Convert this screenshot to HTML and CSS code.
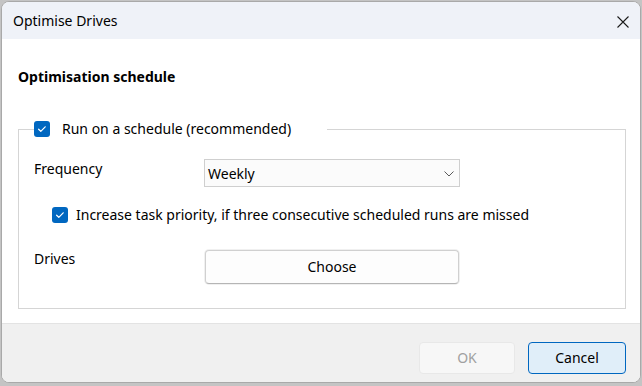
FILE: index.html
```html
<!DOCTYPE html>
<html lang="en">
<head>
<meta charset="utf-8">
<title>Optimise Drives</title>
<link rel="stylesheet" href="styles.css">
</head>
<body>
<div class="window">
  <div class="titlebar">
    <span class="title">Optimise Drives</span>
    <span class="close" aria-label="Close">
      <svg width="12" height="12" viewBox="0 0 12 12"><path d="M0.5 0.5 L11.5 11.5 M11.5 0.5 L0.5 11.5" stroke="#1b1b1b" stroke-width="1.1" fill="none"/></svg>
    </span>
  </div>
  <div class="content">
    <h1 class="heading">Optimisation schedule</h1>
    <fieldset class="group">
      <legend class="group-legend">
        <span class="check">
          <svg width="16" height="16" viewBox="0 0 16 16"><path d="M4.6 8.2 L6.8 10.3 L11.2 5.8" stroke="#fff" stroke-width="1.2" fill="none" stroke-linecap="round" stroke-linejoin="round"/></svg>
        </span>
        <span class="legend-text">Run on a schedule (recommended)</span>
      </legend>
      <div class="row freq-row">
        <span class="label">Frequency</span>
        <div class="combo">
          <span class="combo-value">Weekly</span>
          <svg class="chevron" width="10" height="6" viewBox="0 0 10 6"><path d="M0.5 0.5 L5 5 L9.5 0.5" stroke="#5a5a5a" stroke-width="1" fill="none"/></svg>
        </div>
      </div>
      <div class="check-row">
        <span class="check">
          <svg width="16" height="16" viewBox="0 0 16 16"><path d="M4.6 8.2 L6.8 10.3 L11.2 5.8" stroke="#fff" stroke-width="1.2" fill="none" stroke-linecap="round" stroke-linejoin="round"/></svg>
        </span>
        <span class="check-text">Increase task priority, if three consecutive scheduled runs are missed</span>
      </div>
      <div class="row drives-row">
        <span class="label">Drives</span>
        <button class="btn choose" type="button">Choose</button>
      </div>
    </fieldset>
  </div>
  <div class="footer">
    <button class="btn ok" type="button" disabled>OK</button>
    <button class="btn cancel" type="button">Cancel</button>
  </div>
</div>
</body>
</html>
```

FILE: styles.css
```css
html, body {
  margin: 0;
  padding: 0;
}
body {
  background: #c4c4c4;
  width: 642px;
  height: 386px;
  overflow: hidden;
  font-family: "Noto Sans", "Open Sans", sans-serif;
  color: #000;
}
.window {
  box-sizing: border-box;
  margin: 1px 0 0 1px;
  width: 640px;
  height: 382px;
  border: 1px solid #a9a9a9;
  border-radius: 8px;
  overflow: hidden;
  background: #fff;
  display: flex;
  flex-direction: column;
}
.titlebar {
  height: 37px;
  flex: none;
  background: #eff2f8;
  display: flex;
  align-items: center;
  justify-content: space-between;
  padding: 0 11px 0 11px;
}
.title {
  font-size: 14px;
  line-height: 18px;
  margin-top: 1px;
}
.close {
  display: flex;
  width: 12px;
  height: 12px;
  margin-top: 2px;
}
.content {
  flex: none;
  height: 285px;
  box-sizing: border-box;
  padding: 28px 0 0 16px;
  border-bottom: 1px solid #e3e3e3;
}
.heading {
  margin: 0;
  font-size: 14px;
  line-height: 20px;
  font-weight: 700;
}
.group {
  box-sizing: border-box;
  margin: 33px 0 0 0;
  width: 608px;
  border: 1px solid #d5d5d5;
  padding: 21px 15px 24px 15px;
  min-width: 0;
}
.group-legend {
  display: flex;
  align-items: center;
  padding: 0 36px 0 0;
  height: 18px;
}
.check {
  display: flex;
  width: 16px;
  height: 16px;
  border-radius: 3px;
  background: #0067c0;
  flex: none;
}
.legend-text {
  margin-left: 12px;
  font-size: 14px;
  line-height: 18px;
}
.row {
  display: grid;
  grid-template-columns: 170px 256px;
  align-items: start;
}
.label {
  font-size: 14px;
  line-height: 20px;
}
.combo {
  box-sizing: border-box;
  height: 28px;
  border: 1px solid #cfcfcf;
  background: #fbfbfb;
  display: flex;
  align-items: center;
  justify-content: space-between;
  padding: 0 5px 0 3px;
}
.combo-value {
  font-size: 14px;
  line-height: 20px;
  margin-top: 1px;
}
.chevron {
  display: block;
  margin-top: 2px;
}
.check-row {
  display: flex;
  align-items: center;
  height: 20px;
  margin: 18px 0 0 18px;
}
.check-text {
  margin-left: 8px;
  font-size: 14px;
  line-height: 20px;
}
.drives-row {
  margin-top: 24px;
}
.btn {
  font-family: inherit;
  font-size: 14px;
  line-height: 20px;
  box-sizing: border-box;
  border-radius: 4px;
  padding: 0;
  color: #000;
}
.choose {
  height: 34px;
  width: 254px;
  margin: 1px 0 0 1px;
  background: #fdfdfd;
  border: 1px solid #d0d0d0;
  border-bottom-color: #b5b5b5;
  box-shadow: 0 0 0 1px #f0f0f0;
}
.footer {
  flex: 1;
  background: #f0f0f0;
  display: flex;
  justify-content: flex-end;
  align-items: flex-start;
  gap: 13px;
  padding: 18px 14px 0 0;
}
.ok {
  width: 96px;
  height: 32px;
  background: #f7f7f7;
  border: 1px solid #e8e8e8;
  color: #a0a0a0;
}
.cancel {
  width: 98px;
  height: 32px;
  background: #e0eef9;
  border: 1px solid #0067c0;
}
```
